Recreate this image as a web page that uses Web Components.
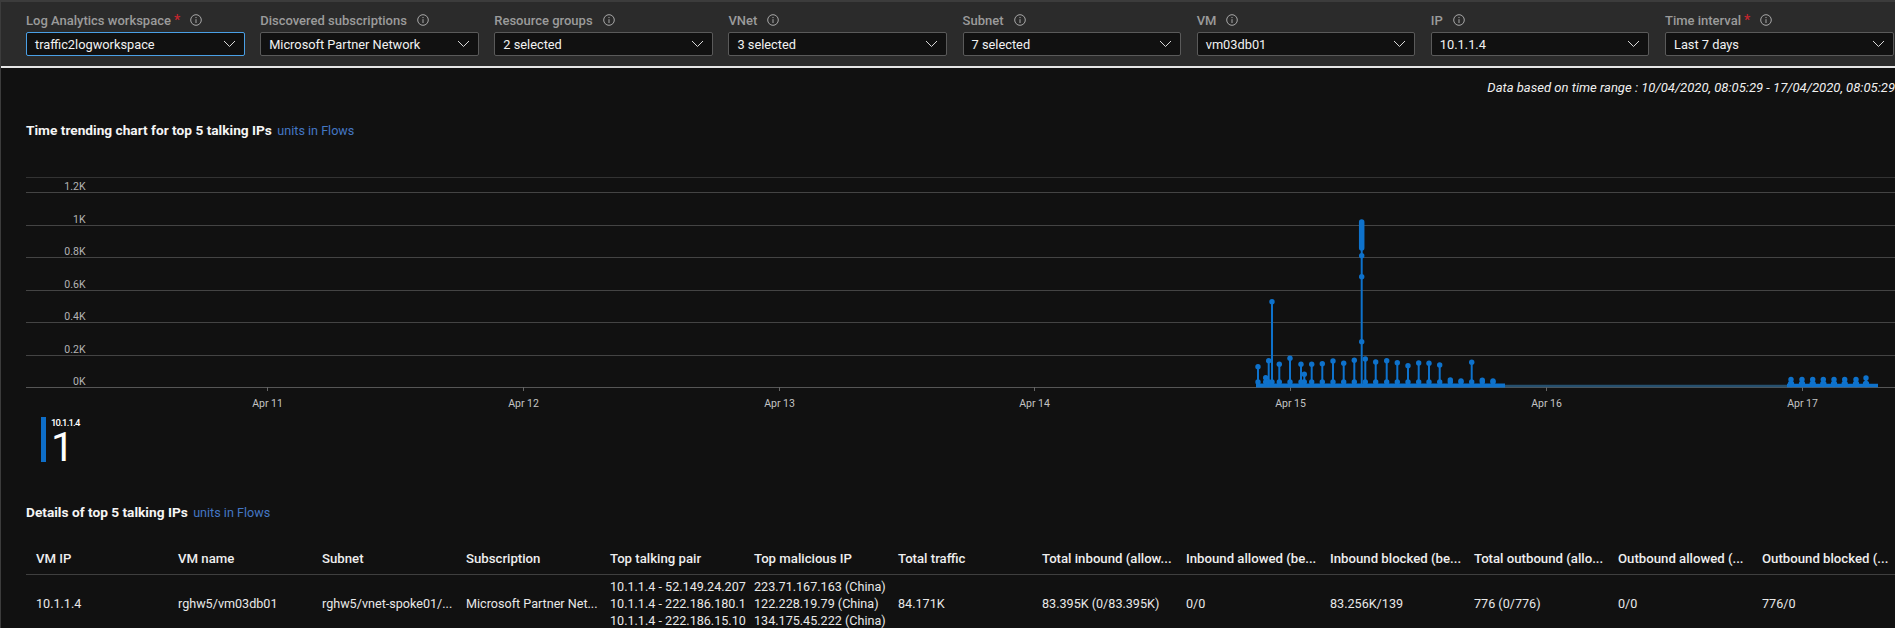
<!DOCTYPE html>
<html>
<head>
<meta charset="utf-8">
<style>
  html, body { margin: 0; height: 100%; overflow: hidden; background: #111; }
  body { font-family: Roboto, "Liberation Sans", sans-serif; font-size: 13px; color: #eee; border-left: 1px solid #3c3c3c; box-sizing: border-box; }
  main { display: block; padding: 0 0 0 25px; }
</style>
</head>
<body>
<filter-bar>
  <filter-select label="Log Analytics workspace" value="traffic2logworkspace" required focused></filter-select>
  <filter-select label="Discovered subscriptions" value="Microsoft Partner Network"></filter-select>
  <filter-select label="Resource groups" value="2 selected"></filter-select>
  <filter-select label="VNet" value="3 selected"></filter-select>
  <filter-select label="Subnet" value="7 selected"></filter-select>
  <filter-select label="VM" value="vm03db01"></filter-select>
  <filter-select label="IP" value="10.1.1.4"></filter-select>
  <filter-select label="Time interval" value="Last 7 days" required></filter-select>
</filter-bar>
<main>
  <time-range>Data based on time range : 10/04/2020, 08:05:29 - 17/04/2020, 08:05:29</time-range>
  <section-title style="margin-top:24px" units="units in Flows">Time trending chart for top 5 talking IPs</section-title>
  <trend-chart></trend-chart>
  <legend-stat label="10.1.1.4" value="1"></legend-stat>
  <section-title style="margin-top:41px" units="units in Flows">Details of top 5 talking IPs</section-title>
  <details-table></details-table>
</main>
<script>
class FilterBar extends HTMLElement {
  constructor() {
    super();
    this.attachShadow({ mode: "open" });
    this.shadowRoot.innerHTML = `
      <style>
        :host { display: grid; grid-template-columns: repeat(7, 218.6px) 229px; column-gap: 15.55px;
          height: 64px; padding: 0 0 0 25px; background: #2b2b2b; border-top: 2px solid #3c3c3c; border-bottom: 2px solid #e6e6e6; box-sizing: content-box; overflow: hidden; }
      </style>
      <slot></slot>`;
  }
}

class FilterSelect extends HTMLElement {
  constructor() {
    super();
    this.attachShadow({ mode: "open" });
  }
  connectedCallback() {
    const star = this.hasAttribute("required") ? `<span class="star">*</span>` : "";
    const info = `<svg class="info" width="12" height="12" viewBox="0 0 12 12" fill="none" stroke="#a8a8a8" stroke-width="1">
      <circle cx="6" cy="6" r="5.3"/><path d="M6 5.2V9M6 3v1.1"/></svg>`;
    this.shadowRoot.innerHTML = `
      <style>
        :host { display: block; min-width: 0; }
        .label { display: flex; align-items: center; height: 20px; margin-top: 8px; margin-bottom: 2px; color: #9b9b9b; font-weight: 500; font-size: 13px; white-space: nowrap; }
        .star { color: #c4262e; margin-left: 3px; font-size: 14px; }
        .info { margin-left: 10px; }
        .box { display: flex; align-items: center; justify-content: space-between; box-sizing: border-box; height: 24px;
          padding: 0 8px; background: #111; border: 1px solid #5a5a5a; border-radius: 2px; color: #f2f2f2; font-size: 12.8px; white-space: nowrap; }
        :host([focused]) .box { border-color: #4aa0e6; }
        .chev { flex: none; }
      </style>
      <div class="label"><span>${this.getAttribute("label")}</span>${star}${info}</div>
      <div class="box"><span>${this.getAttribute("value")}</span>
        <svg class="chev" width="13" height="8" viewBox="0 0 13 8" fill="none" stroke="#d8d8d8" stroke-width="1"><path d="M1 1l5.5 5.5L12 1"/></svg>
      </div>`;
  }
}

class TimeRange extends HTMLElement {
  constructor() {
    super();
    this.attachShadow({ mode: "open" });
    this.shadowRoot.innerHTML = `
      <style>
        :host { display: block; height: 18px; margin-top: 11px; text-align: right; font-style: italic; font-size: 13.05px; line-height: 18px; color: #f0f0f0; white-space: nowrap; }
      </style>
      <slot></slot>`;
  }
}

class SectionTitle extends HTMLElement {
  constructor() {
    super();
    this.attachShadow({ mode: "open" });
  }
  connectedCallback() {
    this.shadowRoot.innerHTML = `
      <style>
        :host { display: block; height: 18px; line-height: 18px; font-size: 13.7px; font-weight: 700; color: #f5f5f5; white-space: nowrap; }
        .units { font-weight: 400; font-size: 12.6px; color: #4477c4; margin-left: 2px; }
      </style>
      <slot></slot> <span class="units">${this.getAttribute("units")}</span>`;
  }
}

class TrendChart extends HTMLElement {
  constructor() {
    super();
    this.attachShadow({ mode: "open" });
  }
  connectedCallback() {
    // the chart is a free canvas: svg x/y = page x - 26, page y - 170
    const Y0 = 217, STEP = 32.5, X = (x) => x - 26;
    const BLUE = "#0e72cc";
    let s = "";
    s += `<line x1="0" x2="1870" y1="7.5" y2="7.5" stroke="#333"/>`;
    ["0K", "0.2K", "0.4K", "0.6K", "0.8K", "1K", "1.2K"].forEach((t, i) => {
      const y = Math.round(Y0 - i * STEP) + 0.5;
      s += `<line x1="0" x2="1870" y1="${y}" y2="${y}" stroke="${i ? "#444" : "#565656"}"/>`;
      s += `<text x="59.5" y="${y - 3}" text-anchor="end" font-size="10.5" fill="#b4b4b4">${t}</text>`;
    });
    ["Apr 11", "Apr 12", "Apr 13", "Apr 14", "Apr 15", "Apr 16", "Apr 17"].forEach((t, i) => {
      const x = Math.round(X(267 + i * 255.8)) + 0.5;
      s += `<line x1="${x}" x2="${x}" y1="${Y0}" y2="${Y0 + 4}" stroke="#666"/>`;
      s += `<text x="${x}" y="${Y0 + 20}" text-anchor="middle" font-size="10.5" fill="#c4c4c4">${t}</text>`;
    });
    // spikes read from the reference: [x, top y]
    const spikes = [[1258,366.7],[1265.7,377.7],[1268.7,360.7],[1272,301.7],[1279.3,364.3],[1290,358.3],[1301,364.3],[1304.3,374.3],[1311.7,364.3],[1322.3,363.7],[1333,361],[1343.7,363.3],[1354.3,360.3],[1365.3,359],[1375.7,362],[1386.7,360.7],[1397.3,362.7],[1408,365.7],[1418.7,363],[1429,363.3],[1439.7,365],[1450.3,380],[1461,381],[1471.7,362.3],[1482.3,380.3],[1493,381]];
    s += `<line x1="${X(1500)}" x2="${X(1787)}" y1="${Y0 - 1}" y2="${Y0 - 1}" stroke="#26506f" stroke-width="2.5"/>`;
    s += `<line x1="${X(1256)}" x2="${X(1505)}" y1="${Y0 - 1.5}" y2="${Y0 - 1.5}" stroke="${BLUE}" stroke-width="4"/>`;
    s += `<line x1="${X(1787)}" x2="${X(1878)}" y1="${Y0 - 1.5}" y2="${Y0 - 1.5}" stroke="${BLUE}" stroke-width="3.5"/>`;
    spikes.forEach(([x, top]) => {
      const t = top - 170;
      s += `<line x1="${X(x)}" x2="${X(x)}" y1="${Y0}" y2="${t}" stroke="${BLUE}" stroke-width="2"/>`;
      s += `<circle cx="${X(x)}" cy="${t}" r="2.7" fill="${BLUE}"/>`;
      s += `<circle cx="${X(x)}" cy="${Y0 - 5}" r="2.7" fill="${BLUE}"/>`;
    });
    // main spike
    const mx = X(1361.7);
    s += `<line x1="${mx}" x2="${mx}" y1="${Y0}" y2="51" stroke="${BLUE}" stroke-width="2"/>`;
    s += `<line x1="${mx}" x2="${mx}" y1="52" y2="78" stroke="${BLUE}" stroke-width="5.5" stroke-linecap="round"/>`;
    [85.7, 106.7, 171.7].forEach((y) => { s += `<circle cx="${mx}" cy="${y}" r="2.7" fill="${BLUE}"/>`; });
    // Apr 17 bumps
    [1791, 1802, 1812.7, 1823.3, 1834, 1844.7, 1856, 1866].forEach((x, i) => {
      const t = i === 7 ? 208 : 209.5;
      s += `<line x1="${X(x)}" x2="${X(x)}" y1="${Y0}" y2="${t}" stroke="${BLUE}" stroke-width="2.5"/>`;
      s += `<circle cx="${X(x)}" cy="${t}" r="2.7" fill="${BLUE}"/>`;
      s += `<circle cx="${X(x)}" cy="${Y0 - 3}" r="3.2" fill="${BLUE}"/>`;
    });
    this.shadowRoot.innerHTML = `
      <style>
        :host { display: block; height: 240px; margin-top: 31px; }
        svg { display: block; font-family: Roboto, "Liberation Sans", sans-serif; }
      </style>
      <svg width="1869" height="240" viewBox="0 0 1869 240">${s}</svg>`;
  }
}

class LegendStat extends HTMLElement {
  constructor() {
    super();
    this.attachShadow({ mode: "open" });
  }
  connectedCallback() {
    this.shadowRoot.innerHTML = `
      <style>
        :host { display: flex; gap: 5px; height: 45px; margin-top: 7px; margin-left: 15px; }
        .bar { width: 5px; background: #0e6ec8; }
        .txt { display: flex; flex-direction: column; color: #fff; }
        .lbl { font-size: 9.5px; font-weight: 500; line-height: 12px; letter-spacing: -0.8px; }
        .val { font-size: 41px; line-height: 37px; font-weight: 400; }
      </style>
      <div class="bar"></div>
      <div class="txt"><span class="lbl">${this.getAttribute("label")}</span><span class="val">${this.getAttribute("value")}</span></div>`;
  }
}

class DetailsTable extends HTMLElement {
  constructor() {
    super();
    this.attachShadow({ mode: "open" });
  }
  connectedCallback() {
    const heads = ["VM IP", "VM name", "Subnet", "Subscription", "Top talking pair", "Top malicious IP", "Total traffic",
      "Total inbound (allow...", "Inbound allowed (be...", "Inbound blocked (be...", "Total outbound (allo...", "Outbound allowed (...", "Outbound blocked (..."];
    const row = ["10.1.1.4", "rghw5/vm03db01", "rghw5/vnet-spoke01/...", "Microsoft Partner Net...",
      ["10.1.1.4 - 52.149.24.207", "10.1.1.4 - 222.186.180.1", "10.1.1.4 - 222.186.15.10"],
      ["223.71.167.163 (China)", "122.228.19.79 (China)", "134.175.45.222 (China)"],
      "84.171K", "83.395K (0/83.395K)", "0/0", "83.256K/139", "776 (0/776)", "0/0", "776/0"];
    const cell = (c) => Array.isArray(c) ? c.map((l) => `<div>${l}</div>`).join("") : c;
    this.shadowRoot.innerHTML = `
      <style>
        :host { display: block; margin-top: 26px; }
        .grid { display: grid; grid-template-columns: 142px repeat(12, 144px); }
        .h, .c { padding-left: 10px; white-space: nowrap; }
        .h { height: 28px; line-height: 24px; font-weight: 500; font-size: 13.2px; color: #eee; border-bottom: 1px solid #3f3f3f; box-sizing: border-box; }
        .c { height: 56px; display: flex; flex-direction: column; justify-content: center; line-height: 17px; font-size: 12.6px; color: #e8e8e8; }
      </style>
      <div class="grid">
        ${heads.map((h) => `<div class="h">${h}</div>`).join("")}
        ${row.map((c) => `<div class="c">${cell(c)}</div>`).join("")}
      </div>`;
  }
}

customElements.define("filter-bar", FilterBar);
customElements.define("filter-select", FilterSelect);
customElements.define("time-range", TimeRange);
customElements.define("section-title", SectionTitle);
customElements.define("trend-chart", TrendChart);
customElements.define("legend-stat", LegendStat);
customElements.define("details-table", DetailsTable);
</script>
</body>
</html>
